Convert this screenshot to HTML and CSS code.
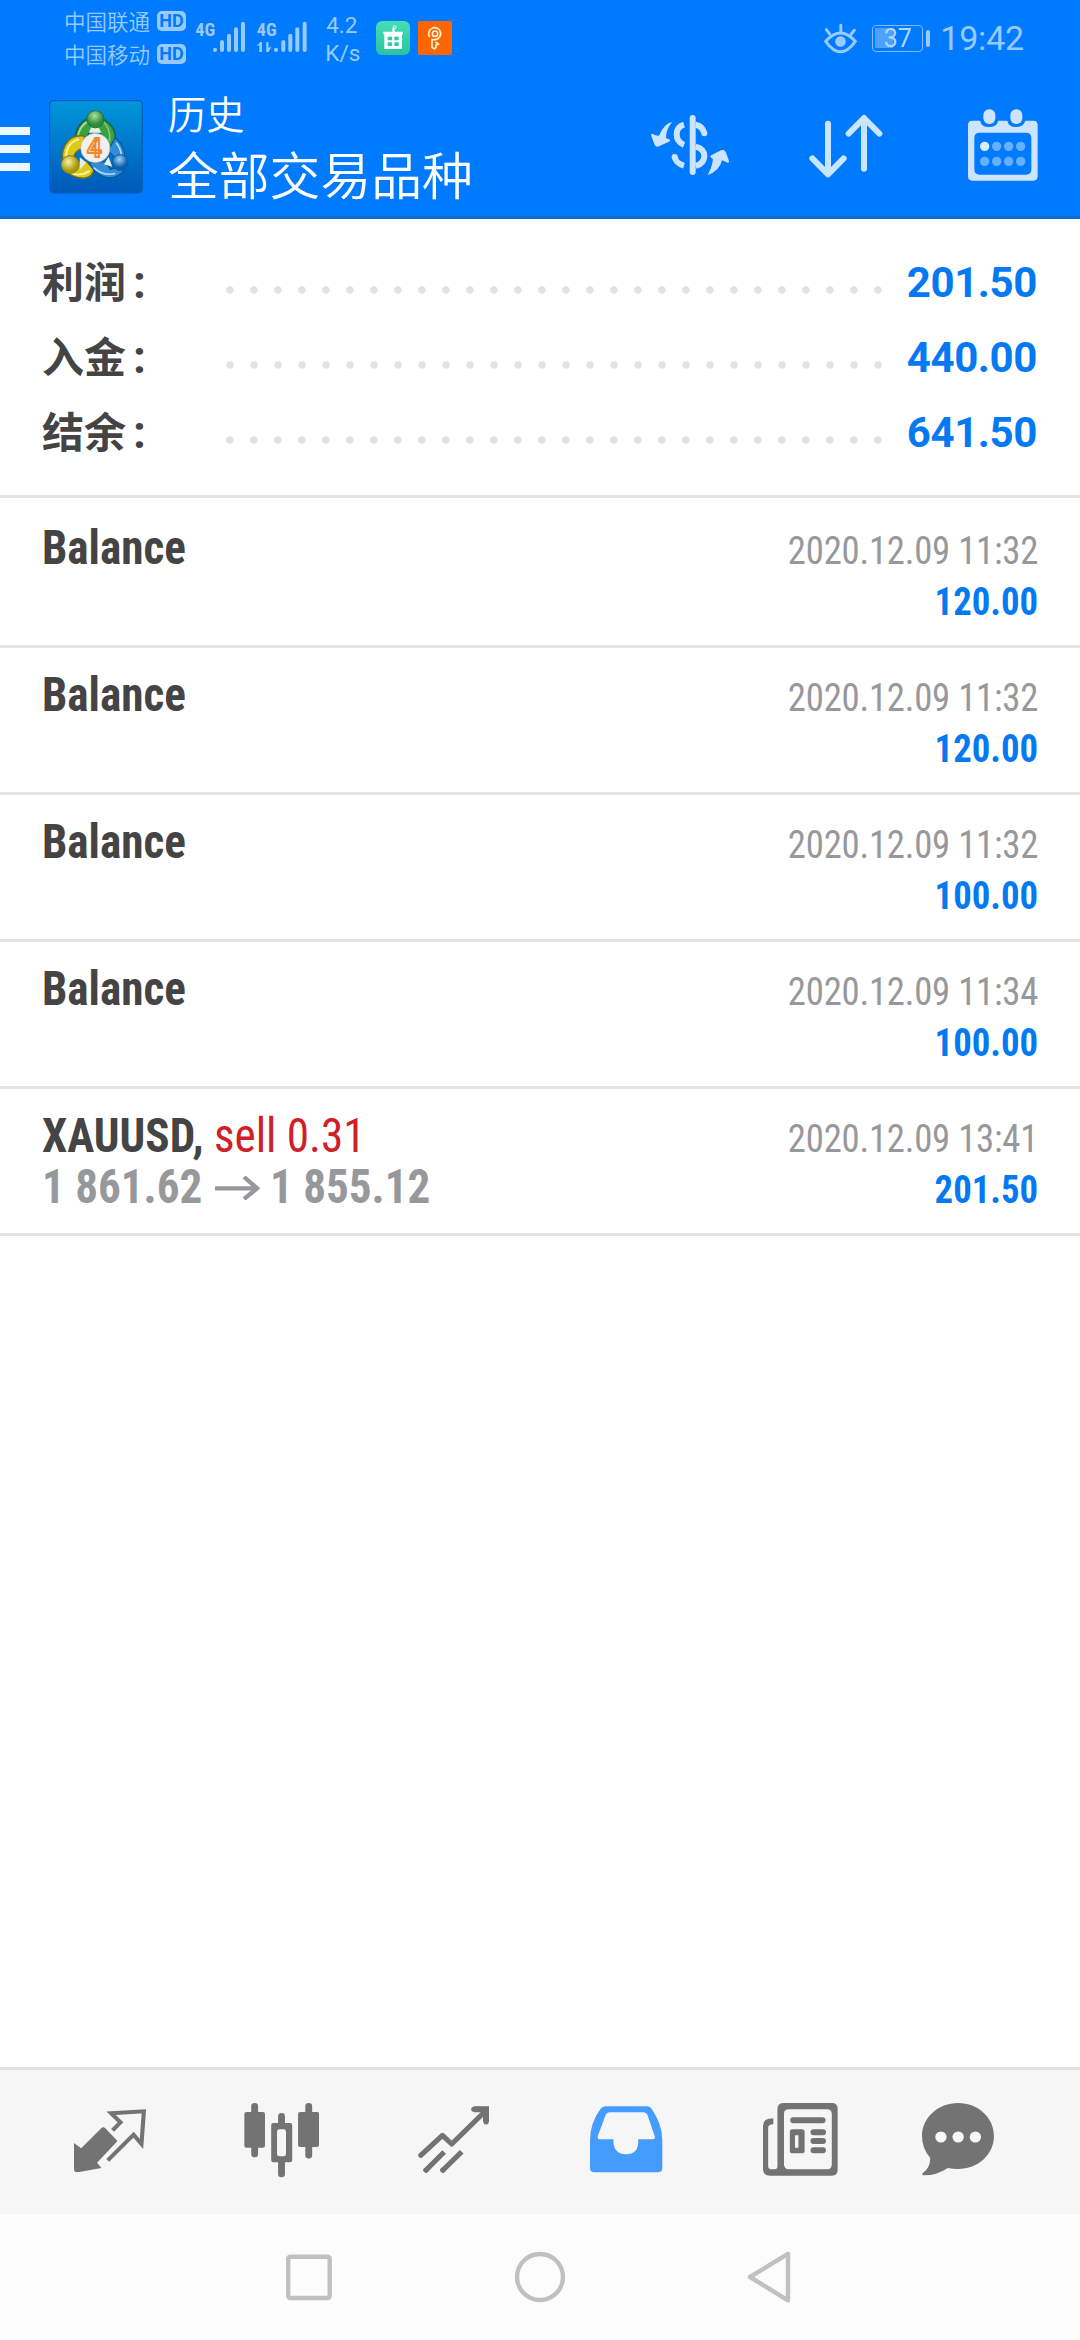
FILE: index.html
```html
<!DOCTYPE html>
<html lang="zh-CN">
<head>
<meta charset="utf-8">
<title>历史</title>
<link rel="stylesheet" href="styles.css">
</head>
<body>
<div class="screen">
  <header class="top">
    <div class="status">
      <div class="carriers">
        <div class="carrier">中国联通<span class="hd">HD</span></div>
        <div class="carrier">中国移动<span class="hd">HD</span></div>
      </div>
      <svg class="signals" viewBox="465 60 340 102" fill="#99caff">
        <text x="466" y="107" class="net">4G</text>
        <text x="650" y="107" class="net">4G</text>
        <g stroke="#99caff" stroke-width="12" stroke-linecap="round">
          <path d="M525 149v1M546 126v24M567 107v43M588 88v62M609 71v79"/>
          <path d="M708 149v1M730 126v24M751 107v43M772 88v62M794 71v79"/>
        </g>
        <path d="M650 137l11-11h5v30h-8v-20zM679 126h6l1 18 9-5-9 17h-7z"/>
      </svg>
      <div class="speed"><span>4.2</span><span>K/s</span></div>
      <svg class="badge" viewBox="0 0 102 102">
        <defs><linearGradient id="mint" x2="0" y2="1"><stop stop-color="#48ddb6"/><stop offset="1" stop-color="#28c3a1"/></linearGradient></defs>
        <rect width="102" height="102" rx="18" fill="url(#mint)"/>
        <path fill="#fff" d="M22 32h27V22h7v10h25v8h-3v44H25V40h-3z"/>
        <path fill="#2fcba8" d="M35 47h13v11H35zM55 47h13v11H55zM35 64h13v11H35zM55 64h13v11H55z"/>
        <circle cx="56" cy="19" r="4.500" fill="none" stroke="#fff" stroke-width="3"/>
      </svg>
      <svg class="badge" viewBox="0 0 102 102">
        <rect width="102" height="102" rx="6" fill="#ff6500"/>
        <g fill="none" stroke="#fff3d8" stroke-width="5">
          <path d="M35 48a18 18 0 1 1 17 8H42v23l7 5 5-5v-7l7-3-9-6"/>
          <circle cx="51" cy="38" r="8"/>
        </g>
      </svg>
      <svg class="eye" viewBox="66 64 104 94" fill="none" stroke="#99caff" stroke-linecap="round">
        <path stroke-width="9" d="M73 120q45-51 90 0q-45 63-90 0zM119 71v19M75 84l10 13M160 86l-10 12"/>
        <circle cx="118" cy="120" r="16" fill="#99caff" stroke="none"/>
      </svg>
      <div class="battery"><span class="level"></span><span class="pct">37</span></div>
      <time class="clock">19:42</time>
    </div>
    <div class="bar">
      <div class="burger"><i></i><i></i><i></i></div>
      <svg class="app" viewBox="16 13 284 284">
        <defs>
          <linearGradient id="sky" x2="0" y2="1"><stop stop-color="#0097dc"/><stop offset="1" stop-color="#0058b8"/></linearGradient>
          <radialGradient id="gr" cx=".45" cy=".3"><stop stop-color="#aee0a0"/><stop offset="1" stop-color="#2b8c3c"/></radialGradient>
          <radialGradient id="ye" cx=".4" cy=".35"><stop stop-color="#fbf3a0"/><stop offset="1" stop-color="#a89a10"/></radialGradient>
          <radialGradient id="bl" cx=".45" cy=".3"><stop stop-color="#9cd4f8"/><stop offset="1" stop-color="#0a60ae"/></radialGradient>
        </defs>
        <rect x="18" y="15" width="280" height="279" rx="12" fill="url(#sky)" stroke="#0760bd" stroke-width="4"/>
        <path d="M22 32h272M22 88h272M22 250h272M48 20v270M102 20v270M210 20v270M264 20v270" stroke="#1186cf" stroke-width="1" opacity=".4"/>
        <path d="M130 70Q95 90 94 139L125 143Q134 105 154 98Q176 105 183 150L196 165Q212 155 216 130Q218 92 178 70Z" fill="#3b9f46" stroke="#176435" stroke-width="4"/>
        <path d="M102 130Q107 88 139 76" fill="none" stroke="#a7df9c" stroke-width="5"/>
        <path d="M176 76Q204 96 199 138" fill="none" stroke="#84c978" stroke-width="5"/>
        <path d="M124 122Q82 116 65 149Q51 177 61 199L87 199Q88 170 116 158ZM67 226Q89 250 123 249Q148 246 152 222L130 200 102 200 84 230Z" fill="#dcc91b" stroke="#746c14" stroke-width="4"/>
        <path d="M68 183Q69 141 107 132M82 234Q111 245 139 227" fill="none" stroke="#fbf29b" stroke-width="6"/>
        <path d="M216 127Q250 155 245 203L220 207Q214 177 193 169ZM137 202Q160 250 207 248Q242 239 248 212L201 222 185 199Z" fill="#308dd6" stroke="#0758a0" stroke-width="4"/>
        <path d="M219 142Q234 160 235 184M151 217Q180 244 216 235" fill="none" stroke="#b0dcfa" stroke-width="5"/>
        <path d="M145 92h20l9 20h-38zM109 186l20 16-20 22zM196 185l-14 22 25 8z" fill="#e7efdc"/>
        <circle cx="156" cy="71" r="26" fill="url(#gr)" stroke="#217039" stroke-width="3"/>
        <circle cx="80" cy="208" r="27" fill="url(#ye)" stroke="#888019" stroke-width="3"/>
        <circle cx="231" cy="202" r="24" fill="url(#bl)" stroke="#0960aa" stroke-width="3"/>
        <circle cx="156" cy="158" r="44" fill="#f2efee" stroke="#c6c2bb" stroke-width="2"/>
        <text x="131" y="186" class="four">4</text>
      </svg>
      <div class="titles"><div class="sub">历史</div><div class="main">全部交易品种</div></div>
      <svg class="ico currency" viewBox="63 75 236 180" fill="none" stroke="#cce4ff">
        <path d="M188 84v162" stroke-width="18" stroke-linecap="round"/>
        <path d="M162 104Q140 110 140 133Q140 156 162 165M197 104Q217 107 223 130M197 170Q223 177 223 198Q223 220 197 228M134 201Q138 220 162 227" stroke-width="18"/>
        <circle cx="223" cy="130" r="9" fill="#cce4ff" stroke="none"/><circle cx="134" cy="201" r="9" fill="#cce4ff" stroke="none"/>
        <path d="M125 96Q102 101 87 137Q78 138 67 131Q62 131 64 138L74 165Q78 173 87 169L117 155Q123 151 117 148L108 145Q108 117 125 98ZM233 254Q245 236 249 208L242 202Q239 198 245 195L273 181Q283 177 287 185L297 213Q298 220 290 217L276 211Q268 244 233 255Z" fill="#cce4ff" stroke="none"/>
      </svg>
      <svg class="ico sort" viewBox="537 73 222 192" fill="none" stroke="#c9e5ff" stroke-width="18" stroke-linecap="round" stroke-linejoin="round">
        <path d="M594 102v152M547 206l47 48 47-48M702 237V86M656 132l46-47 46 47"/>
      </svg>
      <svg class="ico calendar" viewBox="1013 58 210 216" fill="#cce4ff">
        <path fill-rule="evenodd" d="M1026 93h23q4 19 27 19t28-19h27q4 19 26 19t28-19h24q13 0 13 13v154q0 13-13 13h-183q-13 0-13-13V106q0-13 13-13zM1048 129q-16 0-16 16v94q0 16 16 16h139q16 0 16-16v-94q0-16-16-16z"/>
        <rect x="1059" y="59" width="36" height="44" rx="17"/><rect x="1140" y="59" width="36" height="44" rx="17"/>
        <circle cx="1063" cy="170" r="14" fill="#d6eeff"/>
        <g fill="#66b0ff"><circle cx="1099" cy="170" r="14"/><circle cx="1135" cy="170" r="14"/><circle cx="1171" cy="170" r="14"/><circle cx="1063" cy="215" r="14"/><circle cx="1099" cy="215" r="14"/><circle cx="1135" cy="215" r="14"/><circle cx="1171" cy="215" r="14"/></g>
      </svg>
    </div>
  </header>

  <section class="summary">
    <div class="sum"><span class="label">利润<b>:</b></span><i class="dots"></i><span class="value">201.50</span></div>
    <div class="sum"><span class="label">入金<b>:</b></span><i class="dots"></i><span class="value">440.00</span></div>
    <div class="sum"><span class="label">结余<b>:</b></span><i class="dots"></i><span class="value">641.50</span></div>
  </section>

  <main class="deals">
    <article class="deal"><div class="left"><div class="name">Balance</div></div><div class="right"><div class="date">2020.12.09 11:32</div><div class="amount">120.00</div></div></article>
    <article class="deal"><div class="left"><div class="name">Balance</div></div><div class="right"><div class="date">2020.12.09 11:32</div><div class="amount">120.00</div></div></article>
    <article class="deal"><div class="left"><div class="name">Balance</div></div><div class="right"><div class="date">2020.12.09 11:32</div><div class="amount">100.00</div></div></article>
    <article class="deal"><div class="left"><div class="name">Balance</div></div><div class="right"><div class="date">2020.12.09 11:34</div><div class="amount">100.00</div></div></article>
    <article class="deal"><div class="left"><div class="name">XAUUSD, <span class="sell">sell 0.31</span></div><div class="prices"><span>1 861.62</span><svg class="arrow" viewBox="0 0 45 24" preserveAspectRatio="none"><path d="M0 12.300h42M29 1l13 11.300L29 23" fill="none" stroke="#97989b" stroke-width="4.300"/></svg><span>1 855.12</span></div></div><div class="right"><div class="date">2020.12.09 13:41</div><div class="amount">201.50</div></div></article>
  </main>

  <nav class="tabs">
    <svg class="tab quotes" viewBox="215 176 210 190" preserveAspectRatio="none" fill="#737373">
      <path d="M215 278l21 16 58-60q6-6 12 0l32 34q4 4 0 8l-56 61 13 16-69 13q-11 1-11-10z"/>
      <path d="M327 240l23-24-27-27 95-6-7 98-23-28-75 77" fill="none" stroke="#737373" stroke-width="12"/>
    </svg>
    <svg class="tab charts" viewBox="708 158 219 224" preserveAspectRatio="none" fill="#737373">
      <path d="M739 168v143M896 168v147M817 198v22M817 334v37" stroke="#737373" stroke-width="20" stroke-linecap="round"/>
      <rect x="709" y="185" width="60" height="107" rx="6"/><rect x="865" y="185" width="61" height="105" rx="6"/>
      <path fill-rule="evenodd" d="M793 218h49q6 0 6 6v106q0 6-6 6h-49q-6 0-6-6V224q0-6 6-6zM811 237q-7 0-7 7v67q0 7 7 7h12q7 0 7-7v-67q0-7-7-7z"/>
    </svg>
    <svg class="tab trade" viewBox="1213 167 208 200" preserveAspectRatio="none" fill="none" stroke="#737373">
      <path stroke-width="15" stroke-linecap="round" stroke-linejoin="round" d="M1221 315l63-60 27 26 98-99M1375 177h36v38M1236 360l1-1M1285 360l1-1"/>
      <path stroke-width="15" d="M1233 363l56-58M1282 363l58-59"/>
      <path stroke-width="18" d="M1375 177h36v38"/>
    </svg>
    <svg class="tab history" viewBox="146 167 210 200" preserveAspectRatio="none" fill="#459cff">
      <path fill-rule="evenodd" d="M191 168h120q9 0 14 7 31 46 31 95v83q0 13-13 13H159q-13 0-13-13v-83q0-51 30-94 6-8 15-8zM204 186q-9 0-13 9l-22 61q-3 11 7 11h38v9q3 36 37 36 34 0 35-36v-9h41q10 0 7-9l-20-61q-3-11-14-11z"/>
    </svg>
    <svg class="tab news" viewBox="647 158 218 218" preserveAspectRatio="none" fill="#737373">
      <path fill-rule="evenodd" d="M708 158h139q17 0 17 17v184q0 17-17 17H668q-21 0-21-21V226q0-22 30-22v18q-15 0-15 11v115q0 9 9 9h10q8 0 8-9V175q0-17 19-17zM723 177q-15 0-15 13v152q0 15 15 15h111q13 0 13-15V192q0-15-14-15z"/>
      <path d="M735 210h85M794 246h27M794 272h27M794 300h27" stroke="#737373" stroke-width="18" stroke-linecap="round"/>
      <path fill-rule="evenodd" d="M733 237h27q8 0 8 8v56q0 8-8 8h-27q-8 0-8-8v-56q0-8 8-8zM740 255v37h10v-37z"/>
    </svg>
    <svg class="tab chat" viewBox="1109 158 210 218" preserveAspectRatio="none" fill="#737373">
      <path d="M1214 158c58 0 104 44 104 99s-46 99-104 99q-16 0-30-3-31 22-70 22-7-1-3-6 22-17 22-46-24-29-24-66c0-55 47-99 105-99z"/>
      <g fill="#f8f8f8"><circle cx="1164" cy="260" r="16.500"/><circle cx="1214" cy="260" r="16.500"/><circle cx="1264" cy="260" r="16.500"/></g>
    </svg>
  </nav>

  <footer class="system">
    <svg viewBox="0 0 52 52"><rect x="5.200" y="5.800" width="41.500" height="41.200" rx="2" /></svg>
    <svg viewBox="0 0 52 52"><circle cx="26" cy="26" r="23"/></svg>
    <svg viewBox="0 0 52 52"><path d="M43 2.800v46.500L5 26z"/></svg>
  </footer>
</div>
</body>
</html>
```
FILE: styles.css
```css
* { box-sizing: border-box; }
body { margin: 0; background: #fff; font-family: Roboto, "Noto Sans CJK SC", sans-serif; }
svg { display: block; flex: none; }
.screen { width: 1080px; height: 2340px; display: flex; flex-direction: column; overflow: hidden; }

.top { height: 219px; background: #007aff; border-bottom: 3px solid #116bcf; color: #fff; }
.status { height: 76px; display: flex; align-items: center; padding-left: 64px; color: #99caff; }
.carriers { width: 131px; margin-top: -2px; }
.carrier { display: flex; align-items: center; height: 33px; font: 350 21.500px/33px "Noto Sans CJK SC", sans-serif; white-space: nowrap; }
.hd { width: 29px; height: 20px; margin-left: 7px; border-radius: 5px; background: #99caff; color: #007aff; font: 700 18px/20px Roboto, sans-serif; text-align: center; }
.signals { width: 113.300px; height: 34px; margin-top: -2px; }
.net { font: 700 55px "Roboto Condensed", sans-serif; }
.speed { width: 33px; margin: 1px 0 0 17px; display: flex; flex-direction: column; font-size: 22.500px; line-height: 28px; text-align: center; }
.badge { width: 34px; height: 34px; margin-left: 8px; }
.speed + .badge { margin-left: 18px; }
.eye { width: 35px; height: 31px; margin-left: 371px; }
.battery { position: relative; width: 51px; height: 27px; margin-left: 14px; border: 1.500px solid #80bcff; border-radius: 4px; text-align: center; font-size: 25px; line-height: 25px; }
.battery::after { content: ""; position: absolute; right: -8px; top: 4px; width: 4px; height: 17px; border-radius: 2px; background: #99caff; }
.level { position: absolute; left: 2px; top: 2px; width: 18px; height: 20px; background: #4da2ff; }
.pct { position: relative; color: #b3d7ff; }
.clock { margin-left: 17px; font-size: 34px; line-height: 76px; letter-spacing: -.2px; }

.bar { display: flex; align-items: flex-start; height: 140px; }
.burger { width: 30px; margin: 51px 19px 0 0; display: flex; flex-direction: column; gap: 10px; }
.burger i { height: 8px; background: #edf7ff; }
.app { width: 94px; height: 94px; margin-top: 24px; }
.four { font: 700 78px Roboto, sans-serif; fill: #fff3e0; stroke: #ef8a2c; stroke-width: 6px; }
.titles { width: 481px; padding-left: 25px; font-family: "Noto Sans CJK SC", sans-serif; font-weight: 350; white-space: nowrap; }
.sub { font-size: 38.300px; line-height: 46px; margin-top: 14px; }
.main { font-size: 50.800px; line-height: 60px; margin-top: 7px; }
.currency { width: 78.700px; height: 60px; margin: 39px 0 0 27px; }
.sort { width: 74px; height: 64px; margin: 38px 0 0 79px; }
.calendar { width: 70px; height: 72px; margin: 33px 0 0 85px; }

.summary { height: 279px; padding: 26px 43px 0 42px; border-bottom: 3px solid #e3e3e3; }
.sum { height: 75px; display: flex; align-items: center; }
.label { width: 184px; margin-top: -3px; display: flex; align-items: baseline; color: #444; font: 700 42px/75px "Noto Sans CJK SC", sans-serif; }
.label b { font: 700 46px/75px Roboto, sans-serif; margin-left: 7px; }
.dots { width: 672px; height: 8px; margin-top: 15px; background: radial-gradient(circle at 4px 4px, #e2e2e2 3.300px, transparent 4.200px) 0 0 / 24px 8px; }
.value { flex: 1; text-align: right; color: #0479f2; font-size: 42px; line-height: 75px; font-weight: 700; letter-spacing: -.4px; }

.deals { flex: 1; padding-top: 3px; font-family: "Roboto Condensed", Roboto, sans-serif; }
.deal { height: 147px; display: flex; justify-content: space-between; padding: 18px 42px 0; border-bottom: 3px solid #e3e3e3; }
.left { transform: scaleX(.94); transform-origin: left; }
.name, .prices { font-size: 48px; line-height: 51px; font-weight: 700; white-space: pre; }
.name { color: #444; margin-top: 3px; }
.sell { color: #cf2027; font-weight: 400; }
.prices { color: #97989b; display: flex; align-items: center; }
.arrow { width: 48px; height: 24px; margin: 2px 11px 0 13px; }
.right { text-align: right; font-size: 39.500px; line-height: 51px; transform: scaleX(.93); transform-origin: right; }
.date { color: #97989b; margin-top: 6px; letter-spacing: -.25px; }
.amount { color: #0479f2; font-weight: 700; }

.tabs { height: 147px; display: flex; background: #f6f6f6; border-top: 3px solid #e0e0e0; }
.quotes { width: 72.300px; height: 63.300px; margin: 39px 0 0 74px; }
.charts { width: 75.400px; height: 74.700px; margin: 33px 0 0 97.500px; }
.trade { width: 71.600px; height: 66.700px; margin: 36px 0 0 98.500px; }
.history { width: 72.300px; height: 66.700px; margin: 36px 0 0 101px; }
.news { width: 75px; height: 72.700px; margin: 33px 0 0 100.200px; }
.chat { width: 72.300px; height: 72.700px; margin: 33px 0 0 84px; }

.system { height: 126px; background: #fcfcfc; display: flex; gap: 179px; padding: 37px 0 0 283px; }
.system svg { width: 52px; height: 52px; fill: none; stroke: #c0c0c0; stroke-width: 4.400px; stroke-linejoin: round; }
```
